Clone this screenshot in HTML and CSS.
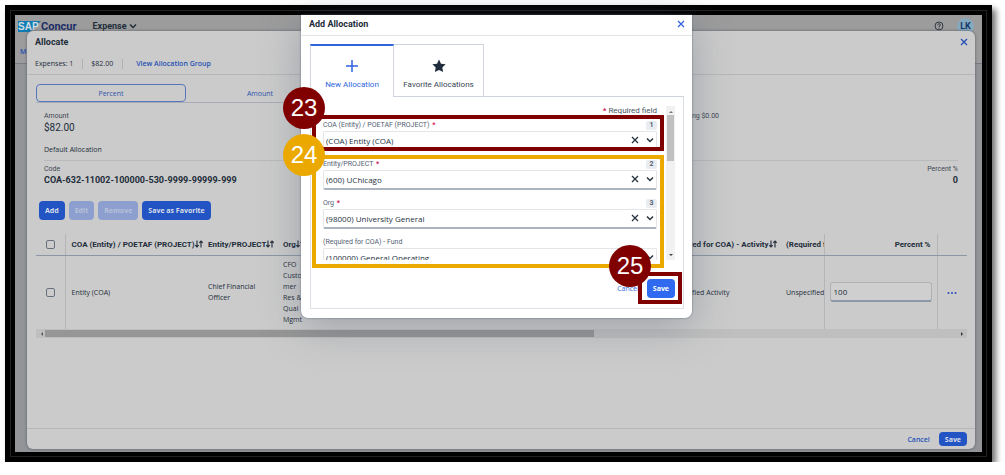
FILE: index.html
```html
<!DOCTYPE html>
<html lang="en">
<head>
<meta charset="utf-8">
<title>Allocate - SAP Concur</title>
<link rel="stylesheet" href="styles.css">
</head>
<body>
<svg class="defs" aria-hidden="true">
  <symbol id="x" viewBox="0 0 8 8"><path d="M1 1l6 6M7 1l-6 6" fill="none" stroke="currentColor" stroke-width="1.3"/></symbol>
  <symbol id="chev" viewBox="0 0 8 8"><path d="M1 2.5l3 3 3-3" fill="none" stroke="currentColor" stroke-width="1.5"/></symbol>
  <symbol id="sort" viewBox="0 0 8 8"><path d="M2 .5v6.5M.3 5.2L2 7l1.7-1.8M6 7.5v-6.500M4.300 2.800L6 1l1.700 1.800" fill="none" stroke="currentColor" stroke-width="1.1"/></symbol>
</svg>
<div class="frame">
  <main class="app">
    <header class="topbar">
      <svg class="logo" viewBox="0 0 23 11" role="img" aria-label="SAP"><path d="M0 0h23L12 11H0z" fill="#0f7db5"/><text x="0" y="9" class="logo-text">SAP</text></svg>
      <span class="brand">Concur</span>
      <button class="menu">Expense <svg class="ico"><use href="#chev"/></svg></button>
      <span class="grow"></span>
      <svg class="help" viewBox="0 0 10 10" role="img" aria-label="Help"><circle cx="5" cy="5" r="4" fill="none" stroke="#333a44"/><path d="M3.700 4.200c0-2 2.700-1.800 2.700-.2 0 1-1.400 1-1.400 2M5 6.700v1" fill="none" stroke="#333a44"/></svg>
      <span class="avatar">LK</span>
    </header>
    <nav class="subnav"><a href="#">Manage</a></nav>
  </main>

  <section class="dialog" aria-label="Allocate">
    <header class="dialog-head">
      <div class="title-row"><h1>Allocate</h1><button class="icon-btn" aria-label="Close"><svg class="ico"><use href="#x"/></svg></button></div>
      <div class="meta"><span class="meta-item">Expenses: 1</span><span class="meta-item amount">$82.00</span><a href="#">View Allocation Group</a></div>
    </header>
    <div class="dialog-body">
      <div class="segments"><button class="seg on">Percent</button><button class="seg">Amount</button></div>
      <div class="summary">
        <div class="amount-row">
          <div><div class="label">Amount</div><div class="value">$82.00</div></div>
          <div class="label remaining">Remaining $0.00</div>
        </div>
        <div class="default">Default Allocation</div>
        <div class="code-row">
          <div><div class="label">Code</div><div class="code">COA-632-11002-100000-530-9999-99999-999</div></div>
          <div class="right"><div class="label">Percent %</div><div class="code">0</div></div>
        </div>
      </div>
      <div class="actions">
        <button class="btn">Add</button><button class="btn" disabled>Edit</button><button class="btn" disabled>Remove</button><button class="btn">Save as Favorite</button>
      </div>
      <table class="grid">
        <colgroup><col class="c-check"><col class="c-coa"><col class="c-entity"><col class="c-org"><col><col class="c-act"><col class="c-req"><col class="c-pct"><col class="c-more"></colgroup>
        <thead><tr>
          <th class="line check"><input type="checkbox" aria-label="Select all"></th>
          <th>COA (Entity) / POETAF (PROJECT)<svg class="ico"><use href="#sort"/></svg></th>
          <th>Entity/PROJECT<svg class="ico"><use href="#sort"/></svg></th>
          <th>Org<svg class="ico"><use href="#sort"/></svg></th>
          <th></th>
          <th>(Required for COA) - Activity<svg class="ico"><use href="#sort"/></svg></th>
          <th class="line clip">(Required for COA)</th>
          <th class="line num">Percent %</th>
          <th></th>
        </tr></thead>
        <tbody><tr>
          <td class="line check"><input type="checkbox" aria-label="Select row"></td>
          <td>Entity (COA)</td>
          <td>Chief Financial<br>Officer</td>
          <td class="org">CFO<br>Custo<br>mer<br>Res &amp;<br>Qual<br>Mgmt</td>
          <td></td>
          <td>Unspecified Activity</td>
          <td class="line clip">Unspecified</td>
          <td class="line pct"><input class="pct-input" type="text" value="100" aria-label="Percent"></td>
          <td class="more"><button class="icon-btn" aria-label="More"><svg class="dots" viewBox="0 0 10 4"><circle cx="1.500" cy="2" r="1"/><circle cx="5" cy="2" r="1"/><circle cx="8.500" cy="2" r="1"/></svg></button></td>
        </tr></tbody>
      </table>
      <div class="hbar"><span class="arrow left"></span><span class="hthumb"></span><span class="grow"></span><span class="arrow rightward"></span></div>
    </div>
    <footer class="dialog-foot"><button class="link">Cancel</button><button class="btn small">Save</button></footer>
  </section>

  <div class="layer">
    <section class="modal" aria-label="Add Allocation">
      <header class="modal-head"><h2>Add Allocation</h2><button class="icon-btn" aria-label="Close"><svg class="ico"><use href="#x"/></svg></button></header>
      <div class="modal-body">
        <div class="tabs">
          <button class="tab on"><svg class="tab-ico" viewBox="0 0 14 14"><path d="M7 1v12M1 7h12" stroke="currentColor" stroke-width="1.500"/></svg>New Allocation</button>
          <button class="tab second"><svg class="tab-ico" viewBox="0 0 14 14"><path d="M7 .5l2 4.200 4.600.6-3.300 3.200.8 4.600L7 10.900l-4.100 2.200.8-4.600L.4 5.300 5 4.700z" fill="#1f2d3d"/></svg>Favorite Allocations</button>
          <span class="tab-rest"></span>
        </div>
        <div class="panel">
          <div class="scroller">
            <form class="fields">
              <p class="required"><b>*</b> Required field</p>
              <div class="field"><div class="field-top"><label for="f1">COA (Entity) / POETAF (PROJECT) <b>*</b></label><span class="num-badge">1</span></div>
                <div class="combo"><input id="f1" type="text" value="(COA) Entity (COA)"><button type="button" aria-label="Clear"><svg class="ico"><use href="#x"/></svg></button><button type="button" aria-label="Open"><svg class="ico"><use href="#chev"/></svg></button></div></div>
              <div class="field"><div class="field-top"><label for="f2">Entity/PROJECT <b>*</b></label><span class="num-badge">2</span></div>
                <div class="combo"><input id="f2" type="text" value="(600) UChicago"><button type="button" aria-label="Clear"><svg class="ico"><use href="#x"/></svg></button><button type="button" aria-label="Open"><svg class="ico"><use href="#chev"/></svg></button></div></div>
              <div class="field"><div class="field-top"><label for="f3">Org <b>*</b></label><span class="num-badge">3</span></div>
                <div class="combo"><input id="f3" type="text" value="(98000) University General"><button type="button" aria-label="Clear"><svg class="ico"><use href="#x"/></svg></button><button type="button" aria-label="Open"><svg class="ico"><use href="#chev"/></svg></button></div></div>
              <div class="field"><div class="field-top"><label for="f4">(Required for COA) - Fund</label></div>
                <div class="combo"><input id="f4" type="text" value="(100000) General Operating"><button type="button" aria-label="Open"><svg class="ico"><use href="#chev"/></svg></button></div></div>
            </form>
            <div class="vbar"><span class="arrow up"></span><span class="vthumb"></span><span class="grow"></span><span class="arrow down"></span></div>
          </div>
          <div class="panel-foot"><button class="link">Cancel</button><button class="btn bright">Save</button></div>
        </div>
      </div>
      <span class="box box-23"></span><span class="box box-24"></span><span class="box box-25"></span>
      <span class="dot dot-23">23</span><span class="dot dot-24">24</span><span class="dot dot-25">25</span>
    </section>
  </div>
</div>
</body>
</html>
```

FILE: styles.css
```css
* { box-sizing: border-box; }
body { margin: 0; background: #fff; color: #222d3a; font: 7px/11px "Open Sans", "Noto Sans", sans-serif; }
button, input { font: inherit; color: inherit; margin: 0; }
button { background: none; border: 0; padding: 0; cursor: pointer; }
a { color: #234fb4; text-decoration: none; font-weight: 600; }
h1, h2, p { margin: 0; font-size: 9px; }
h1, h2, .topbar, .value, .code, .label, .grid th, .tab, .required, .field-top { font-family: Roboto, "Liberation Sans", sans-serif; }
.defs { position: absolute; width: 0; height: 0; }
.ico { width: 8px; height: 8px; flex: none; vertical-align: -1px; }
.grow { flex: 1; }

.frame { position: relative; margin: 5px 13px 0 5px; min-height: calc(100vh - 18px); padding: 10px; background: #000; box-shadow: 4px 4px 6px rgba(0,0,0,.55); display: flex; }
.frame::before { content: ""; position: absolute; inset: 5px; border: 1px solid #222; }
.app { position: relative; flex: 1; background: #929498; }
.topbar { display: flex; align-items: center; height: 22px; padding: 0 8px 0 3px; background: #9c9c9c; }
.logo { width: 23px; height: 11px; }
.logo-text { font: 700 10px "Liberation Sans", sans-serif; fill: #d4dde2; }
.brand { font-size: 11px; font-weight: 700; color: #1c2c66; }
.menu { margin-left: 16px; font-size: 9px; font-weight: 700; color: #222d3a; }
.help { width: 10px; height: 10px; margin-right: 13px; }
.avatar { width: 17px; height: 17px; border-radius: 50%; background: #86a9bd; color: #143a6b; font-weight: 700; font-size: 9px; line-height: 17px; text-align: center; }
.subnav { height: 27px; padding: 9px 5px; border-bottom: 1px solid #777b82; background: #9c9c9c; }

.dialog { position: absolute; inset: 26px 17px 13px 22px; display: flex; flex-direction: column; background: #cbcbcb; border-radius: 6px; box-shadow: 0 0 3px #555b66; }
.dialog-head { padding: 6px 7px 5px 8px; border-bottom: 1px solid #b7b7b9; }
.title-row { display: flex; justify-content: space-between; align-items: center; }
.icon-btn { color: #234fb4; line-height: 8px; }
.meta { display: flex; align-items: center; padding-top: 10px; }
.meta-item { padding-right: 9px; border-right: 1px solid #b0b1b4; margin-right: 8px; line-height: 10px; }
.meta-item.amount { margin-right: 13px; }
.dialog-body { flex: 1; padding: 9px 8px 0 9px; }
.segments { display: flex; border-bottom: 1px solid #a9adb5; width: 298px; }
.seg { flex: 1; height: 18px; color: #2f55ad; }
.seg.on { border: 1px solid #5877bb; border-radius: 4px; }
.summary { padding: 9px 9px 0 8px; }
.label { font-size: 7px; line-height: 9px; color: #3d4652; }
.value { font-size: 10px; line-height: 13px; }
.amount-row, .code-row { display: flex; justify-content: space-between; }
.remaining { margin-right: 239px; }
.default { padding: 10px 0 5px; border-bottom: 1px solid #bababc; }
.code-row { padding-top: 4px; }
.code { font-size: 9px; line-height: 13px; font-weight: 700; }
.right { text-align: right; }
.actions { display: flex; gap: 4px; padding: 14px 3px; }
.btn { height: 19px; padding: 0 6px; border-radius: 4px; background: #2354c4; color: #d8deea; font-weight: 700; }
.btn:disabled { background: #8d9fce; color: #b8c1da; }
.btn.small { height: 14px; }
.btn.bright { background: #2f6af0; color: #fff; }

.grid { width: 100%; table-layout: fixed; border-collapse: collapse; text-align: left; }
.c-check { width: 29px; } .c-coa { width: 137px; } .c-entity { width: 75px; } .c-org { width: 30px; }
.c-act { width: 120px; } .c-req { width: 44px; } .c-pct { width: 113px; } .c-more { width: 30px; }
.grid th { height: 21px; border-bottom: 1px solid #8b97a5; padding: 0 0 0 6px; white-space: nowrap; font-size: 8px; }
.grid td { height: 74px; padding: 0 0 0 6px; vertical-align: middle; white-space: nowrap; }
.grid .line { border-right: 1px solid #b4b5b7; }
.grid .check { padding: 0 0 0 10px; line-height: 0; }
.grid .clip { overflow: hidden; }
.grid .num { text-align: right; padding-right: 6px; }
.grid .pct { padding: 0 5px; }
.grid .more { text-align: center; padding: 0; }
.grid input[type=checkbox] { appearance: none; width: 9px; height: 9px; border: 1px solid #67717e; border-radius: 2px; }
.pct-input { width: 100%; height: 20px; padding: 0 3px; font-size: 8px; background: #cfcfcf; border: 1px solid #aeb2b7; border-bottom: 2px solid #8b98a5; border-radius: 3px; }
.dots { width: 10px; height: 4px; fill: #2b4db3; }
.hbar { display: flex; align-items: center; height: 9px; background: #bfbfbf; }
.arrow { width: 9px; height: 9px; display: flex; align-items: center; justify-content: center; }
.arrow::before { content: ""; border: 2px solid transparent; }
.left::before { border-right-color: #555; }
.rightward::before { border-left-color: #333; }
.up::before { border-bottom-color: #777; }
.down::before { border-top-color: #444; }
.hthumb { width: 59%; height: 7px; background: #969696; }
.dialog-foot { display: flex; justify-content: flex-end; align-items: center; gap: 9px; height: 21px; padding: 0 8px; border-top: 1px solid #b7b7b9; }
.link { color: #2553ba; font-weight: 600; }

.layer { position: absolute; inset: 10px 14px 10px 10px; display: flex; justify-content: center; align-items: flex-start; }
.modal { position: relative; width: 391px; background: #fff; border-radius: 0 0 7px 7px; box-shadow: 0 0 2px #5d6878, 0 8px 40px rgba(70,80,100,.35); }
.modal-head { display: flex; justify-content: space-between; align-items: center; height: 21px; padding: 0 7px 2px 8px; border-bottom: 1px solid #e3e4e8; }
.modal .icon-btn { color: #2f64dd; }
.modal-body { padding: 8px 8px 9px 9px; }
.tabs { display: flex; }
.tab { display: flex; flex-direction: column; align-items: center; justify-content: flex-end; gap: 6px; width: 84px; height: 53px; padding-bottom: 7px; border: 1px solid #d3d7e2; border-top: 2px solid #2f64dd; border-bottom: 0; color: #2f64dd; font-size: 8px; }
.tab.second { width: 90px; border-top: 1px solid #cdd3dd; border-left: 0; border-bottom: 1px solid #cdd3dd; color: #3a4655; padding-bottom: 6px; }
.tab-rest { flex: 1; border-bottom: 1px solid #cdd3dd; }
.tab-ico { width: 14px; height: 14px; }
.panel { border: 1px solid #dcdfe6; border-top: 0; padding: 9px 8px 10px 12px; }
.scroller { display: flex; height: 154px; overflow: hidden; gap: 9px; }
.fields { flex: 1; }
.required { font-size: 8px; line-height: 10px; height: 14px; text-align: right; color: #4b5663; }
.fields b { color: #d0245c; margin-left: 1px; }
.field { height: 39px; }
.field-top { display: flex; justify-content: space-between; align-items: center; height: 11px; font-size: 7px; line-height: 9px; color: #536274; }
.num-badge { width: 11px; border-radius: 2px; background: #e9ecf0; text-align: center; font-weight: 700; }
.combo { display: flex; align-items: center; gap: 7px; height: 20px; padding-right: 2px; border: 1px solid #e3e5e9; border-bottom: 2px solid #acb4bf; border-radius: 2px; color: #27333f; }
.combo input { flex: 1; min-width: 0; padding: 0 2px; border: 0; background: none; outline: 0; font-size: 8px; }
.combo button { line-height: 8px; }
.vbar { display: flex; flex-direction: column; width: 9px; background: #f1f1f1; }
.vthumb { width: 7px; height: 46px; margin: 0 1px; background: #c0c0c0; }
.panel-foot { display: flex; justify-content: flex-end; align-items: center; gap: 8px; padding-top: 19px; }
.panel-foot .link { color: #2f64dd; font-weight: 400; }
.panel-foot .btn { padding: 0 6px; }

.box { position: absolute; left: 11px; right: 28px; border: 4px solid #800000; pointer-events: none; }
.box-23 { top: 100px; height: 36px; }
.box-24 { top: 140px; height: 113px; border-color: #eba900; }
.box-25 { left: auto; right: 10px; top: 257px; width: 44px; height: 32px; }
.dot { position: absolute; left: -18px; width: 42px; height: 42px; border-radius: 50%; background: #800000; color: #fff; font: 24px/42px "Liberation Sans", Arial, sans-serif; text-align: center; }
.dot-23 { top: 72px; }
.dot-24 { top: 119px; background: #eba900; }
.dot-25 { left: auto; right: 41px; top: 230px; }
```
